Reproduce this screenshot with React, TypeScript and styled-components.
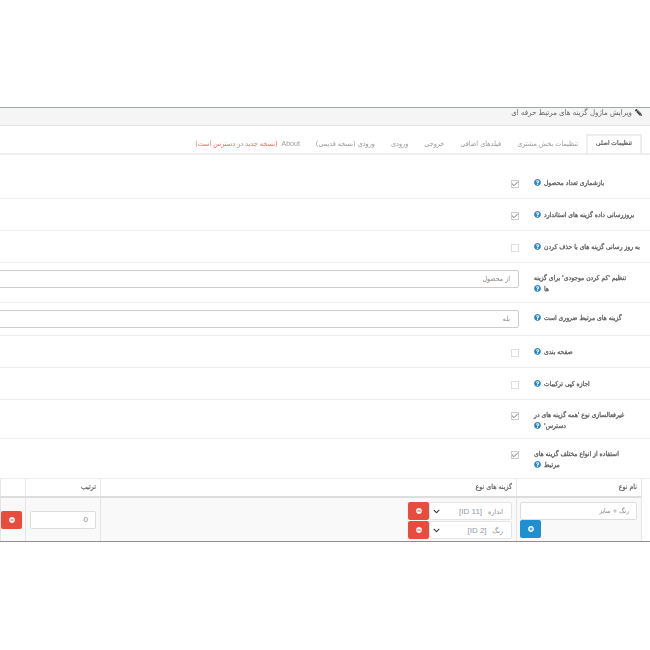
import styled, { createGlobalStyle } from "styled-components";
import { Check as CheckMark } from "lucide-react";
import {
  FaChevronDown,
  FaMinusCircle,
  FaPencilAlt,
  FaPlusCircle,
  FaQuestionCircle,
} from "react-icons/fa";

const GlobalStyle = createGlobalStyle`
  html, body {
    margin: 0;
    padding: 0;
    background: #fff;
    font-family: "DejaVu Sans", "Liberation Sans", sans-serif;
    font-stretch: condensed;
    overflow: hidden;
  }
`;

const Panel = styled.div`
  direction: rtl;
  width: 650px;
  height: 433px;
  margin-top: 107px;
  overflow: hidden;
  border-top: 1px solid #9fa8a5;
  border-bottom: 1px solid #8f8f8f;
  filter: blur(0.3px);
`;

const Heading = styled.div`
  display: flex;
  align-items: flex-start;
  gap: 3px;
  height: 17px;
  padding: 0 8px 0 0;
  background: #f5f5f5;
  border-bottom: 1px solid #e3e3e3;
  color: #666;
  font-size: 7.8px;
  line-height: 10px;
  svg {
    width: 7px;
    height: 7px;
    margin-top: 1px;
    color: #333;
    transform: scaleX(-1);
  }
`;

const Tabs = styled.div`
  display: flex;
  align-items: flex-start;
  height: 29px;
  padding: 8px 8px 0 0;
  box-sizing: border-box;
  border-bottom: 2px solid #eee;
  white-space: nowrap;
`;

const Tab = styled.div<{ $active?: boolean }>`
  display: flex;
  align-items: center;
  flex: none;
  padding: 0 ${(p) => (p.$active ? 8 : 6)}px 3px;
  height: 21px;
  box-sizing: border-box;
  font-size: ${(p) => (p.$active ? 6.5 : 7.2)}px;
  color: ${(p) => (p.$active ? "#555" : "#999")};
  -webkit-text-stroke: ${(p) => (p.$active ? "0.2px #555" : "0")};
  border: 2px solid ${(p) => (p.$active ? "#eee" : "transparent")};
`;

const Latin = styled.span`
  font-family: "Liberation Sans", sans-serif;
  font-size: 7px;
  color: #999;
`;

const NewVersion = styled.span`
  color: #f46a6a;
  margin-right: 4px;
`;

const Row = styled.div<{ $h: number; $top?: number }>`
  display: flex;
  align-items: flex-start;
  gap: 15px;
  height: ${(p) => p.$h}px;
  box-sizing: border-box;
  padding: ${(p) => p.$top ?? 10}px 9px 0 0;
  border-bottom: 1px solid #eee;
`;

const Label = styled.div`
  flex: none;
  width: 107px;
  text-align: left;
  white-space: pre;
  font-size: 6.7px;
  -webkit-text-stroke: 0.25px #555;
  line-height: 11px;
  color: #555;
  svg {
    width: 7px;
    height: 7px;
    margin-right: 3px;
    color: #2f86c8;
    vertical-align: -1px;
    stroke-width: 0;
  }
`;

const Check = styled.span<{ $on?: boolean }>`
  display: flex;
  align-items: center;
  justify-content: center;
  flex: none;
  width: 8px;
  height: 8px;
  box-sizing: border-box;
  margin-top: 2px;
  border: 1px solid ${(p) => (p.$on ? "#ccc" : "#ddd")};
  background: #fff;
  color: #555;
  svg {
    flex: none;
    width: 8px;
    height: 8px;
  }
`;

const TextInput = styled.div`
  flex: none;
  width: 540px;
  height: 18px;
  margin-top: -3px;
  padding-right: 8px;
  box-sizing: border-box;
  border: 1px solid #ccc;
  border-radius: 2px;
  font-size: 7px;
  line-height: 16px;
  color: #8a8078;
`;

const Table = styled.div`
  width: 641px;
  height: 64px;
  margin-right: 8px;
  border-right: 1px solid #e5e5e5;
`;

const Grid = styled.div`
  display: grid;
  grid-template-columns: 125px 416px 75px 25px;
`;

const HeadCell = styled.div`
  height: 19px;
  padding-right: 4px;
  box-sizing: border-box;
  border-left: 1px solid #e8e8e8;
  border-bottom: 2px solid #ddd;
  font-size: 7px;
  -webkit-text-stroke: 0.15px #555;
  line-height: 17px;
  color: #555;
`;

const BodyCell = styled.div<{ $center?: boolean; $pad?: number }>`
  display: flex;
  flex-direction: column;
  align-items: flex-start;
  justify-content: ${(p) => (p.$center ? "center" : "flex-start")};
  height: 44px;
  padding: ${(p) => (p.$center ? 0 : 4)}px ${(p) => p.$pad ?? 4}px 0 0;
  box-sizing: border-box;
  background: #f9f9f9;
  border-left: 1px solid #e5e5e5;
`;

const NameInput = styled.div`
  width: 117px;
  height: 18px;
  padding-right: 7px;
  box-sizing: border-box;
  background: #fff;
  border: 1px solid #ddd;
  border-radius: 2px;
  font-size: 6.5px;
  line-height: 16px;
  color: #888;
`;

const IconButton = styled.div<{ $color: string; $end?: boolean }>`
  display: flex;
  align-items: center;
  justify-content: center;
  flex: none;
  align-self: ${(p) => (p.$end ? "flex-end" : "auto")};
  width: 21px;
  height: 18px;
  background: ${(p) => p.$color};
  border-radius: 2px;
  color: #fff;
  svg {
    width: 6px;
    height: 6px;
  }
`;

const NameColumn = styled.div`
  display: flex;
  flex-direction: column;
  width: 117px;
`;

const OptionRow = styled.div`
  display: flex;
  width: 104px;
  height: 19px;
`;

const OptionSelect = styled.div`
  display: flex;
  align-items: center;
  justify-content: space-between;
  flex: 1;
  height: 18px;
  box-sizing: border-box;
  padding: 0 8px 0 3px;
  background: #fff;
  border: 1px solid #e4e4e4;
  border-radius: 2px;
  font-size: 7px;
  color: #888;
  svg {
    width: 7px;
    height: 7px;
    color: #333;
  }
`;

const OptionId = styled.span`
  margin-right: 6px;
  font-family: "Liberation Sans", sans-serif;
  font-size: 8px;
  color: #8f97a3;
`;

const OrderInput = styled.div`
  width: 66px;
  height: 18px;
  padding-right: 7px;
  box-sizing: border-box;
  background: #fff;
  border: 1px solid #ddd;
  border-radius: 2px;
  font-family: "Liberation Sans", sans-serif;
  font-size: 8px;
  line-height: 16px;
  color: #888;
`;

type Setting = {
  label: string;
  h: number;
  top?: number;
  on?: boolean;
  value?: string;
};

const settings: Setting[] = [
  { label: "بازشماری تعداد محصول", h: 44, top: 23, on: true },
  { label: "بروزرسانی داده گزینه های استاندارد", h: 32, top: 11, on: true },
  { label: "به روز رسانی گزینه های با حذف کردن", h: 32, top: 11 },
  { label: "تنظیم 'کم کردن موجودی' برای گزینه\nها", h: 40, value: "از محصول" },
  { label: "گزینه های مرتبط ضروری است", h: 33, value: "بله" },
  { label: "صفحه بندی", h: 32, top: 11 },
  { label: "اجازه کپی ترکیبات", h: 32, top: 11 },
  { label: "غیرفعالسازی نوع 'همه گزینه های در\nدسترس'", h: 39, on: true },
  { label: "استفاده از انواع مختلف گزینه های\nمرتبط", h: 40, on: true },
];

const options = [
  { name: "اندازه", id: "[ID 11]" },
  { name: "رنگ", id: "[ID 2]" },
];

export default function App() {
  return (
    <>
      <GlobalStyle />
      <Panel>
        <Heading>
          <FaPencilAlt />
          ویرایش ماژول گزینه های مرتبط حرفه ای
        </Heading>
        <Tabs>
          <Tab $active>تنظیمات اصلی</Tab>
          <Tab>تنظیمات بخش مشتری</Tab>
          <Tab>فیلدهای اضافی</Tab>
          <Tab>خروجی</Tab>
          <Tab>ورودی</Tab>
          <Tab>ورودی (نسخه قدیمی)</Tab>
          <Tab>
            <Latin>About</Latin>
            <NewVersion>(نسخه جدید در دسترس است)</NewVersion>
          </Tab>
        </Tabs>
        {settings.map((s) => (
          <Row key={s.label} $h={s.h} $top={s.top}>
            <Label>
              {s.label}
              <FaQuestionCircle />
            </Label>
            {s.value ? (
              <TextInput>{s.value}</TextInput>
            ) : (
              <Check $on={s.on}>{s.on && <CheckMark strokeWidth={2.5} />}</Check>
            )}
          </Row>
        ))}
        <Table>
          <Grid>
            <HeadCell>نام نوع</HeadCell>
            <HeadCell>گزینه های نوع</HeadCell>
            <HeadCell>ترتیب</HeadCell>
            <HeadCell />
            <BodyCell>
              <NameColumn>
                <NameInput>رنگ + سایز</NameInput>
                <IconButton $color="#1f8fcf" $end>
                  <FaPlusCircle />
                </IconButton>
              </NameColumn>
            </BodyCell>
            <BodyCell>
              {options.map((o) => (
                <OptionRow key={o.id}>
                  <OptionSelect>
                    <span>
                      {o.name}
                      <OptionId>{o.id}</OptionId>
                    </span>
                    <FaChevronDown />
                  </OptionSelect>
                  <IconButton $color="#e74c3c">
                    <FaMinusCircle />
                  </IconButton>
                </OptionRow>
              ))}
            </BodyCell>
            <BodyCell $center>
              <OrderInput>0</OrderInput>
            </BodyCell>
            <BodyCell $center $pad={3}>
              <IconButton $color="#e74c3c">
                <FaMinusCircle />
              </IconButton>
            </BodyCell>
          </Grid>
        </Table>
      </Panel>
    </>
  );
}
